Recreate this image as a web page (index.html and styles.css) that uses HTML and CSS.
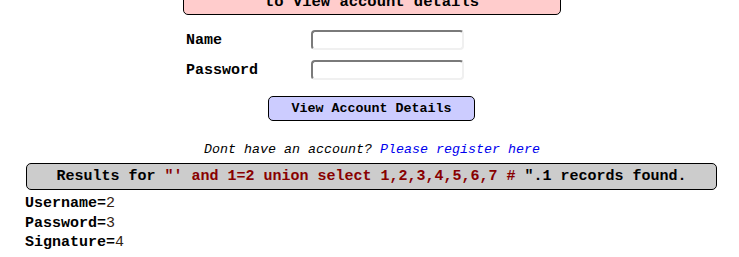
FILE: index.html
```html
<!DOCTYPE html>
<html>
    <head>
        <link rel="stylesheet" href="styles.css">
    </head>
    <body>
        <div class="form-area">
            <div class="form-header">to View account details</div>

            <div class="form-grid">
                <label for="username">Name</label>
                <input type="text" id="username">

                <label for="password">Password</label>
                <input type="password" id="password">
            </div>

            <div class="button-row">
                <button class="view-btn">View Account Details</button>
            </div>

            <p class="register">Dont have an account? <a href="#">Please register here</a></p>
        </div>

        <div class="results">
            Results for <span class="query">"' and 1=2 union select 1,2,3,4,5,6,7 # </span>".1 records found.
        </div>

        <div class="record">
            <div><b>Username=</b>2</div>
            <div><b>Password=</b>3</div>
            <div><b>Signature=</b>4</div>
        </div>
    </body>
</html>
```

FILE: styles.css
```css
body {
    margin: 0;
    padding: 0 22px 0 25px;
    font-family: "Liberation Mono", "DejaVu Sans Mono", monospace;
    font-size: 15px;
    color: #000;
    background-color: #ffffff;
}

.form-area {
    width: 378px;
    margin: 0 0 0 158px;
}

.form-header {
    margin-top: -17px;
    height: 32px;
    padding-top: 8px;
    line-height: 20px;
    text-align: center;
    font-weight: bold;
    font-size: 15.5px;
    background-color: #ffcccc;
    border: 1px solid #000;
    border-radius: 0 0 5px 5px;
    box-sizing: border-box;
}

.form-grid {
    display: grid;
    grid-template-columns: 125px 153px;
    row-gap: 10px;
    align-items: center;
    margin-top: 15px;
    padding-left: 3px;
}

label {
    font-weight: bold;
    font-size: 15px;
}

input {
    height: 20px;
    margin: 0;
    padding: 0 4px;
    box-sizing: border-box;
    border: 2px solid #f0f0f0;
    border-top-color: #7a7a7a;
    border-left-color: #7a7a7a;
    border-radius: 4px;
    background: #fff;
    font-family: inherit;
}

.button-row {
    display: flex;
    justify-content: center;
    margin-top: 16px;
    padding-right: 1px;
}

.view-btn {
    width: 207px;
    height: 25px;
    padding: 0;
    font-family: inherit;
    font-size: 13.33px;
    font-weight: bold;
    color: #000;
    background-color: #ccccff;
    border: 1px solid #000;
    border-radius: 5px;
    cursor: pointer;
}

.register {
    margin: 21px 0 0 0;
    text-align: center;
    font-size: 13.33px;
    font-style: italic;
    line-height: 16px;
}

.register a {
    color: #0000ee;
    text-decoration: none;
}

.results {
    margin-top: 5px;
    margin-left: 1px;
    height: 27px;
    line-height: 26px;
    box-sizing: border-box;
    text-align: center;
    font-weight: bold;
    background-color: #cccccc;
    border: 1px solid #000;
    border-radius: 5px;
}

.query {
    color: #880000;
}

.record {
    line-height: 19.5px;
    margin-top: 4px;
    color: #332211;
}

.record b {
    color: #000;
}
```
